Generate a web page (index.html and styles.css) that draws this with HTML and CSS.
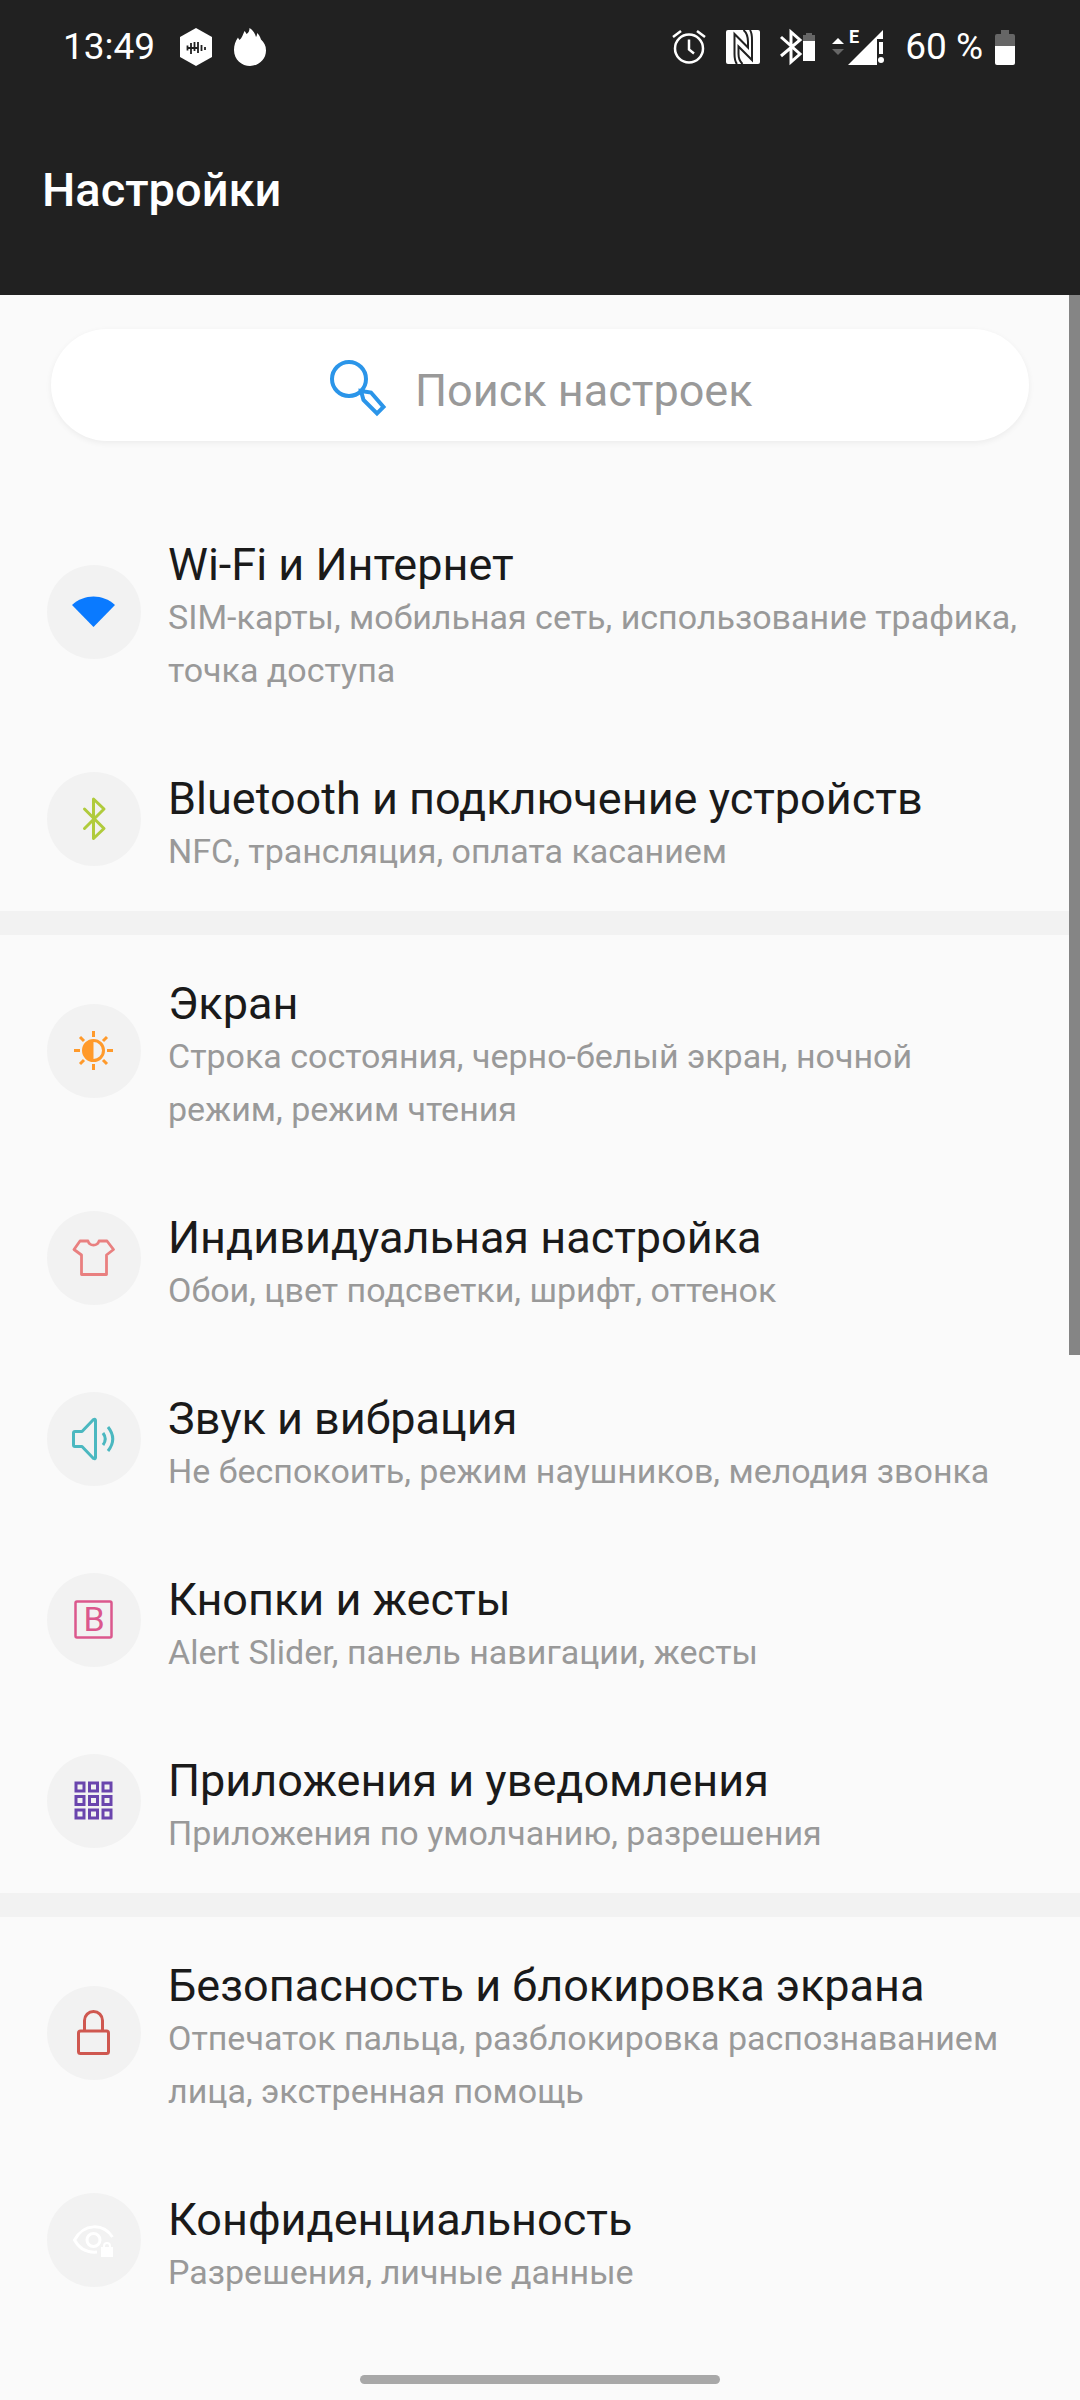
FILE: index.html
```html
<!DOCTYPE html>
<html lang="ru">
<head>
  <meta charset="UTF-8">
  <meta name="viewport" content="width=device-width, initial-scale=1.0">
  <title>Настройки</title>
  <link rel="stylesheet" href="styles.css">
</head>
<body>
  <header class="header">
    <div class="status-bar">
      <span class="clock">13:49</span>
      <svg class="hex" width="34" height="38" viewBox="0 0 34 38">
        <path d="M17 0 33 9v20l-16 9L1 29V9z" fill="#fff"/>
        <path d="M8.500 17.500v5M12 15v11M15.500 14v9M19 14v11M22.500 17v6M8 20h11M26 19v3" stroke="#212121" stroke-width="1.800" fill="none"/>
      </svg>
      <svg class="flame" width="34" height="38" viewBox="0 0 34 38">
        <path d="M16.500 0c3 2 5 4 6.500 9 1-1.500 1-2.500 1-4 2 1.500 3 3.500 4 6.500 3 3 5 6 5 11C33 32 25 38 17 38S1 32 1 22C1 17 2.500 13 5 9.500c.5 1 .8 1.500 1.500 2.500C9 10 10 6.500 11.500 3c1 1 1.500 1.800 2 3C15.500 5 16.500 3 16.500 0z" fill="#fff"/>
      </svg>
      <div class="status-right">
        <svg width="34" height="34" viewBox="0 0 34 34" fill="none" stroke="#fff" stroke-width="2.500">
          <circle cx="17" cy="18.500" r="14"/>
          <path d="M17 9.500v10l5 4M1 7l8-6M33 7l-8-6"/>
        </svg>
        <svg class="nfc" width="34" height="34" viewBox="0 0 34 34">
          <rect width="34" height="34" rx="2" fill="#fff"/>
          <path d="M11 34C8.500 31 8.500 28 8.500 24V4L22 17.500V12C22 6 21 3 17.500 0M24 0C26 3 26 6 26 10v20L12.500 16.500V24c0 4 1 7 4 10" fill="none" stroke="#212121" stroke-width="2"/>
        </svg>
        <svg class="bt" width="36" height="34" viewBox="0 0 36 34">
          <path d="M1 7l19 17-9 8V2l9 8L1 26" fill="none" stroke="#fff" stroke-width="3"/>
          <path d="M23 11V5h3V3h6v2h3v6z" fill="#666"/>
          <path d="M23 11h12v20H23z" fill="#fff"/>
        </svg>
        <svg class="signal" width="53" height="36" viewBox="0 0 53 36">
          <path d="M0 15l6-6 6 6z" fill="#fff"/>
          <path d="M0 20h12l-6 6z" fill="#666"/>
          <path d="M16 36 51 1v9h-6v26z" fill="#fff"/>
          <path d="M47 13h4v12h-4z" fill="#fff"/>
          <circle cx="49" cy="31" r="3" fill="#fff"/>
          <text class="edge" x="17" y="14">E</text>
        </svg>
        <span class="charge">60 %</span>
        <svg width="20" height="35" viewBox="0 0 20 35">
          <path d="M0 16V6q0-2 2-2h4V0h8v4h4q2 0 2 2v10z" fill="#666"/>
          <path d="M0 16h20v17q0 2-2 2H2q-2 0-2-2z" fill="#fff"/>
        </svg>
      </div>
    </div>
    <h1>Настройки</h1>
  </header>

  <main class="content">
    <div class="scrollbar"></div>

    <label class="search">
      <svg width="56" height="56" viewBox="0 0 56 56" fill="none" stroke="#2b95e9" stroke-width="4">
        <circle cx="19" cy="19" r="17"/>
        <path d="M31 31l10 1.500L53.500 47 47 53.500 33.500 40z"/>
      </svg>
      <input type="text" placeholder="Поиск настроек" aria-label="Поиск настроек">
    </label>

    <section class="group">
      <a class="item" href="#">
        <span class="icon">
          <svg width="48" height="48" viewBox="0 0 48 48"><path d="M23.500 39 2 17C14 5.500 33 5.500 45 17z" fill="#0a7aff"/></svg>
        </span>
        <span class="text">
          <span class="title">Wi-Fi и Интернет</span>
          <span class="summary">SIM-карты, мобильная сеть, использование трафика, точка доступа</span>
        </span>
      </a>
      <a class="item" href="#">
        <span class="icon">
          <svg width="48" height="48" viewBox="0 0 48 48" fill="none" stroke="#b0cb3c" stroke-width="3" stroke-linecap="round" stroke-linejoin="round"><path d="M14.500 14 34 33.500 23.500 43.500V4L34 14 14.500 33.500"/></svg>
        </span>
        <span class="text">
          <span class="title">Bluetooth и подключение устройств</span>
          <span class="summary">NFC, трансляция, оплата касанием</span>
        </span>
      </a>
    </section>

    <section class="group">
      <a class="item" href="#">
        <span class="icon">
          <svg width="48" height="48" viewBox="0 0 48 48" fill="none" stroke="#ff9a2b" stroke-width="3">
            <circle cx="23.500" cy="23.500" r="10"/>
            <path d="M23.500 13a10.500 10.500 0 0 0 0 21z" fill="#ff9a2b" stroke="none"/>
            <path d="M23.500 4v6M23.500 37v6M4 23.500h6M37 23.500h6M10 10l4 4M33 33l4 4M10 37l4-4M33 14l4-4"/>
          </svg>
        </span>
        <span class="text">
          <span class="title">Экран</span>
          <span class="summary">Строка состояния, черно-белый экран, ночной режим, режим чтения</span>
        </span>
      </a>
      <a class="item" href="#">
        <span class="icon">
          <svg width="48" height="48" viewBox="0 0 48 48" fill="none" stroke="#e98080" stroke-width="2.800" stroke-linejoin="round"><path d="M10 7h8c1.500 5.500 9.500 5.500 11 0h8l6.500 8.500-7 5.500v19.500h-25V21L4 15.500z"/></svg>
        </span>
        <span class="text">
          <span class="title">Индивидуальная настройка</span>
          <span class="summary">Обои, цвет подсветки, шрифт, оттенок</span>
        </span>
      </a>
      <a class="item" href="#">
        <span class="icon">
          <svg width="48" height="48" viewBox="0 0 48 48" fill="none" stroke="#4bb8c0" stroke-width="3" stroke-linejoin="round">
            <path d="M5 16.500h7L23.500 4.500q2-1 2 1v37q0 2-2 1L12 31.500H5q-1.500 0-1.500-1.500v-12Q3.500 16.500 5 16.500z"/>
            <path d="M33 18q4.500 6 0 12M38 12q9.500 12 0 24"/>
          </svg>
        </span>
        <span class="text">
          <span class="title">Звук и вибрация</span>
          <span class="summary">Не беспокоить, режим наушников, мелодия звонка</span>
        </span>
      </a>
      <a class="item" href="#">
        <span class="icon">
          <svg width="48" height="48" viewBox="0 0 48 48">
            <rect x="5.500" y="5.500" width="36" height="36" rx="1.500" fill="none" stroke="#db588d" stroke-width="2.500"/>
            <text class="key" x="24" y="35" text-anchor="middle">B</text>
          </svg>
        </span>
        <span class="text">
          <span class="title">Кнопки и жесты</span>
          <span class="summary">Alert Slider, панель навигации, жесты</span>
        </span>
      </a>
      <a class="item" href="#">
        <span class="icon">
          <svg width="48" height="48" viewBox="0 0 48 48" fill="none" stroke="#6a45ad" stroke-width="3">
            <path d="M6 6h8v8H6zM19.500 6h8v8h-8zM33 6h8v8h-8zM6 19.500h8v8H6zM19.500 19.500h8v8h-8zM33 19.500h8v8h-8zM6 33h8v8H6zM19.500 33h8v8h-8zM33 33h8v8h-8z"/>
          </svg>
        </span>
        <span class="text">
          <span class="title">Приложения и уведомления</span>
          <span class="summary">Приложения по умолчанию, разрешения</span>
        </span>
      </a>
    </section>

    <section class="group">
      <a class="item" href="#">
        <span class="icon">
          <svg width="48" height="48" viewBox="0 0 48 48" fill="none" stroke="#cf5850" stroke-width="3">
            <rect x="8.500" y="22" width="30" height="22.500" rx="2"/>
            <path d="M14.500 22V11.500a9 9 0 0 1 18 0V22"/>
          </svg>
        </span>
        <span class="text">
          <span class="title">Безопасность и блокировка экрана</span>
          <span class="summary">Отпечаток пальца, разблокировка распознаванием лица, экстренная помощь</span>
        </span>
      </a>
      <a class="item" href="#">
        <span class="icon">
          <svg width="48" height="48" viewBox="0 0 48 48" fill="none" stroke="#fff" stroke-width="3">
            <path d="M27 36C17 37 9 32 4.500 24 14 7 33 7 42.500 21"/>
            <circle cx="23.500" cy="24" r="6.500"/>
            <path d="M31 31h12v10H31z" fill="#fff" stroke="none"/>
            <path d="M34 32v-2a3 3 0 0 1 6 0v2" stroke-width="2"/>
          </svg>
        </span>
        <span class="text">
          <span class="title">Конфиденциальность</span>
          <span class="summary">Разрешения, личные данные</span>
        </span>
      </a>
    </section>
  </main>

  <footer class="nav">
    <div class="nav-pill"></div>
  </footer>
</body>
</html>
```
FILE: styles.css
```css
body {
  font-family: Roboto, "Noto Sans", sans-serif;
  background-color: #fafafa;
  margin: 0;
  color: #1a1a1a;
}

svg {
  display: block;
  flex: none;
  overflow: visible;
}

/* Header */
.header {
  background-color: #212121;
  color: #fff;
  padding: 24px 42px 67px;
}

.status-bar {
  display: flex;
  align-items: center;
  height: 46px;
  padding: 0 23px 0 21px;
  font-size: 37px;
  line-height: 46px;
}

.hex {
  margin-left: 24px;
}

.flame {
  margin-left: 20px;
}

.status-right {
  display: flex;
  align-items: center;
  margin-left: auto;
}

.nfc,
.bt {
  margin-left: 20px;
}

.signal {
  margin-left: 16px;
}

.edge {
  fill: #fff;
  font-size: 18px;
  font-weight: 700;
}

.charge {
  margin: 0 12px 0 20px;
}

h1 {
  margin: 82px 0 0;
  font-size: 47px;
  line-height: 76px;
  font-weight: 500;
}

/* Search */
.content {
  position: relative;
  padding-top: 34px;
}

.scrollbar {
  position: absolute;
  top: 0;
  right: 0;
  width: 11px;
  height: 1060px;
  background-color: #858585;
}

.search {
  display: flex;
  justify-content: center;
  align-items: center;
  gap: 29px;
  box-sizing: border-box;
  height: 112px;
  margin: 0 51px 55px;
  padding: 6px 0 0 7px;
  border-radius: 56px;
  background-color: #fff;
  box-shadow: 0 2px 6px rgba(0, 0, 0, 0.06);
}

.search input {
  width: 342px;
  padding: 4px 0 0;
  border: none;
  outline: none;
  background: none;
  font-family: inherit;
  font-size: 45px;
  color: #1a1a1a;
}

.search input::placeholder {
  color: #999;
  opacity: 1;
}

/* Settings list */
.group + .group {
  border-top: 24px solid #f2f2f2;
}

.item {
  display: flex;
  align-items: center;
  gap: 27px;
  padding: 30px 48px 33px 47px;
  color: inherit;
  text-decoration: none;
}

.icon {
  display: flex;
  flex: none;
  justify-content: center;
  align-items: center;
  width: 94px;
  height: 94px;
  border-radius: 50%;
  background-color: #f2f2f2;
}

.key {
  fill: #db588d;
  font-size: 34px;
}

.text {
  padding-top: 13px;
}

.title,
.summary {
  display: block;
}

.title {
  font-size: 45px;
  line-height: 52px;
}

.summary {
  font-size: 34px;
  line-height: 53px;
  color: #999;
}

/* Gesture bar */
.nav {
  padding: 43px 0 16px;
}

.nav-pill {
  width: calc(100% / 3);
  height: 9px;
  margin: 0 auto;
  border-radius: 5px;
  background-color: #a8a8a8;
}
```
